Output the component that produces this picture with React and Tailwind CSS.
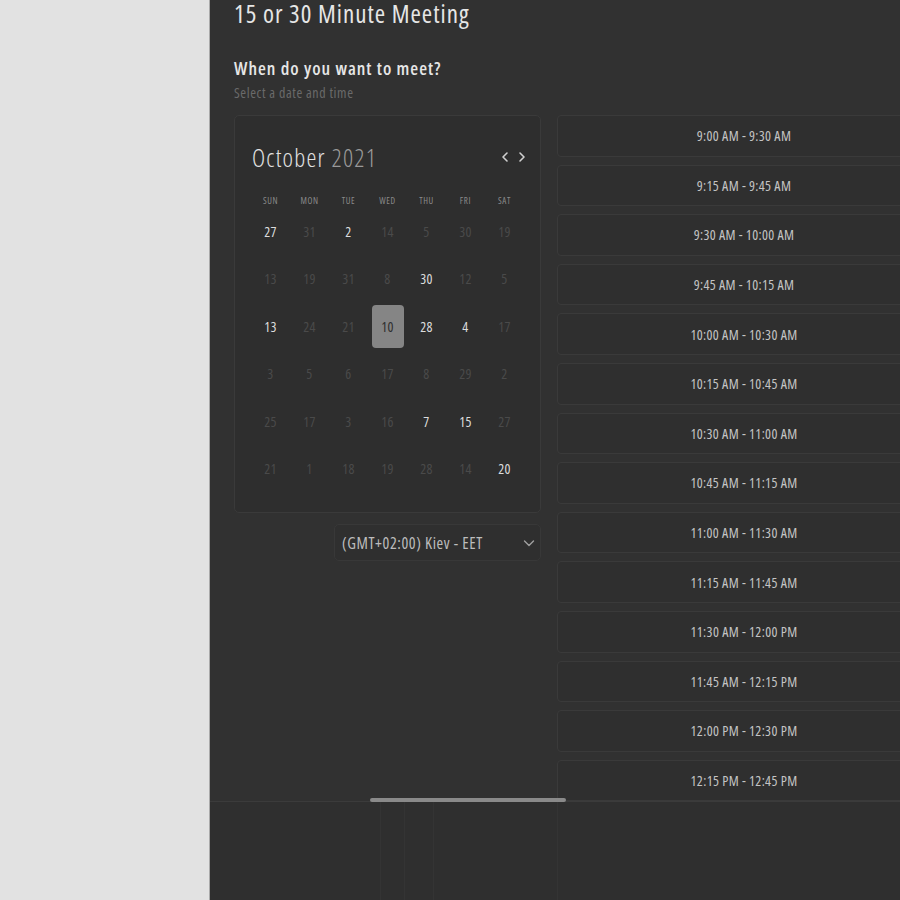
import React from "react";

const rows = [
  [[27, 1], [31, 0], [2, 1], [14, 0], [5, 0], [30, 0], [19, 0]],
  [[13, 0], [19, 0], [31, 0], [8, 0], [30, 1], [12, 0], [5, 0]],
  [[13, 1], [24, 0], [21, 0], [10, 2], [28, 1], [4, 1], [17, 0]],
  [[3, 0], [5, 0], [6, 0], [17, 0], [8, 0], [29, 0], [2, 0]],
  [[25, 0], [17, 0], [3, 0], [16, 0], [7, 1], [15, 1], [27, 0]],
  [[21, 0], [1, 0], [18, 0], [19, 0], [28, 0], [14, 0], [20, 1]],
];

const days = ["SUN", "MON", "TUE", "WED", "THU", "FRI", "SAT"];

const slots = [
  "9:00 AM - 9:30 AM",
  "9:15 AM - 9:45 AM",
  "9:30 AM - 10:00 AM",
  "9:45 AM - 10:15 AM",
  "10:00 AM - 10:30 AM",
  "10:15 AM - 10:45 AM",
  "10:30 AM - 11:00 AM",
  "10:45 AM - 11:15 AM",
  "11:00 AM - 11:30 AM",
  "11:15 AM - 11:45 AM",
  "11:30 AM - 12:00 PM",
  "11:45 AM - 12:15 PM",
  "12:00 PM - 12:30 PM",
  "12:15 PM - 12:45 PM",
];

export default function App() {
  return (
    <div
      className="flex w-[900px] h-[900px] overflow-hidden [font-stretch:75%]"
      style={{ fontFamily: "'Open Sans', 'Noto Sans', sans-serif" }}
    >
      <div className="w-[210px] shrink-0 bg-[#e2e2e2] border-r border-[#a9a9a9]" />
      <div className="flex-1 flex flex-col bg-[#313131] overflow-hidden">
        <div className="h-[801px] shrink-0 overflow-hidden pl-[24px]">
          <h1 className="pt-[1px] text-[25px] leading-[25px] tracking-[1px] text-[#e6e6e6] font-normal whitespace-nowrap">
            15 or 30 Minute Meeting
          </h1>
          <div className="mt-[30px] text-[18px] leading-[24px] tracking-[1px] font-semibold text-[#e6e6e6]">
            When do you want to meet?
          </div>
          <div className="mt-[4px] text-[14px] leading-[18px] tracking-[0.6px] text-[#6a6a6a]">
            Select a date and time
          </div>
          <div className="mt-[13px] flex gap-[16px]">
            <div className="w-[307px] shrink-0 flex flex-col items-end">
              <div className="w-full h-[398px] rounded-[5px] border border-[#3a3a3a] bg-[#2e2e2e] px-[16px]">
                <div className="flex items-center justify-between h-[28px] mt-[27px] pl-[1px] mr-[-3px]">
                  <div className="text-[25px] leading-[28px] tracking-[1.2px] font-light text-[#e2e2e2]">
                    October <span className="text-[#9a9a9a]">2021</span>
                  </div>
                  <div className="flex items-center gap-[7px] text-[#d0d0d0]">
                    <svg width="10" height="14" viewBox="0 0 10 14" fill="none" stroke="currentColor" strokeWidth="1.6" strokeLinecap="round" strokeLinejoin="round">
                      <path d="M7 3 L3 7 L7 11" />
                    </svg>
                    <svg width="10" height="14" viewBox="0 0 10 14" fill="none" stroke="currentColor" strokeWidth="1.6" strokeLinecap="round" strokeLinejoin="round">
                      <path d="M3 3 L7 7 L3 11" />
                    </svg>
                  </div>
                </div>
                <div className="grid grid-cols-7 mt-[23px]">
                  {days.map((d) => (
                    <div key={d} className="h-[14px] text-center text-[9px] leading-[14px] text-[#8a8a8a] tracking-[0.6px]">
                      {d}
                    </div>
                  ))}
                </div>
                <div className="flex flex-col">
                  {rows.map((r, i) => (
                    <div key={i} className="grid grid-cols-7 h-[47.5px] items-center">
                      {r.map(([n, s], j) => (
                        <div key={j} className="flex justify-center">
                          {s === 2 ? (
                            <div className="w-[32px] h-[43px] rounded-[4px] bg-[#858585] flex items-center justify-center text-[14px] tracking-[0.4px] text-[#2e2e2e]">
                              {n}
                            </div>
                          ) : (
                            <div className={"text-[14px] leading-[20px] tracking-[0.4px] " + (s ? "text-[#dcdcdc]" : "text-[#4a4a4a]")}>
                              {n}
                            </div>
                          )}
                        </div>
                      ))}
                    </div>
                  ))}
                </div>
              </div>
              <div className="mt-[11px] w-[207px] h-[37px] rounded-[5px] border border-[#383838] bg-[#2f2f2f] flex items-center justify-between pl-[7px] pr-[5px]">
                <span className="text-[16px] tracking-[0.6px] text-[#bdbdbd] whitespace-nowrap">(GMT+02:00) Kiev - EET</span>
                <svg width="12" height="8" viewBox="0 0 12 8" fill="none" stroke="#a0a0a0" strokeWidth="1.4" strokeLinecap="round" strokeLinejoin="round">
                  <path d="M1.5 2 L6 6.5 L10.5 2" />
                </svg>
              </div>
            </div>
            <div className="w-[374px] shrink-0 flex flex-col gap-[8px]">
              {slots.map((t) => (
                <div
                  key={t}
                  className="h-[41.6px] shrink-0 rounded-[4px] border border-[#3a3a3a] bg-[#2f2f2f] flex items-center justify-center text-[14px] tracking-[0.35px] font-medium text-[#c4c4c4] whitespace-nowrap"
                >
                  {t}
                </div>
              ))}
            </div>
          </div>
        </div>
        <div className="relative flex-1 bg-[#2f2f2f] border-t border-[#3b3b3b]">
          <div className="absolute left-[160px] top-[-4px] w-[196px] h-[4px] rounded-full bg-[#8a8a8a]" />
          <div className="flex h-full pl-[170px]">
            <div className="w-[25px] h-full border-l border-r border-[#343434]" />
            <div className="w-[29px] h-full border-r border-[#343434]" />
            <div className="w-[124px] h-full border-r border-[#343434]" />
          </div>
        </div>
      </div>
    </div>
  );
}
